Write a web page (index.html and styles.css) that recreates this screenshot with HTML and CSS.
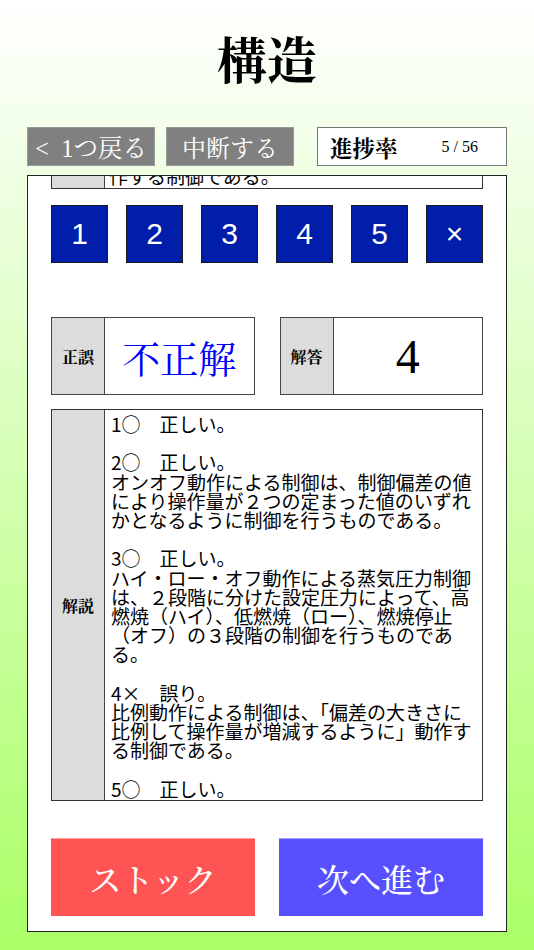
FILE: index.html
```html
<!DOCTYPE html>
<html lang="ja">
<head>
<meta charset="utf-8">
<title>構造</title>
<link rel="stylesheet" href="styles.css">
</head>
<body>
<div class="page">
  <h1 class="title">構造</h1>
  <div class="toolbar">
    <div class="tool-btn back">&lt;&nbsp;&nbsp;1つ戻る</div>
    <div class="tool-btn">中断する</div>
    <div class="progress"><span class="progress-label">進捗率</span><span class="progress-count">5 / 56</span></div>
  </div>
  <div class="panel">
    <div class="q-tail"><div class="cell-label"></div><div class="q-tail-text">作する制御である。</div></div>
    <div class="choices">
      <div class="choice">1</div>
      <div class="choice">2</div>
      <div class="choice">3</div>
      <div class="choice">4</div>
      <div class="choice">5</div>
      <div class="choice">×</div>
    </div>
    <div class="result-row">
      <div class="result-box"><div class="cell-label">正誤</div><div class="result-value verdict">不正解</div></div>
      <div class="result-box"><div class="cell-label">解答</div><div class="result-value answer">4</div></div>
    </div>
    <div class="explain">
      <div class="cell-label">解説</div>
      <div class="explain-text">1○　正しい。<br><br>2○　正しい。<br>オンオフ動作による制御は、制御偏差の値<br>により操作量が２つの定まった値のいずれ<br>かとなるように制御を行うものである。<br><br>3○　正しい。<br>ハイ・ロー・オフ動作による蒸気圧力制御<br>は、２段階に分けた設定圧力によって、高<br>燃焼（ハイ）、低燃焼（ロー）、燃焼停止<br>（オフ）の３段階の制御を行うものであ<br>る。<br><br>4×　誤り。<br>比例動作による制御は、「偏差の大きさに<br>比例して操作量が増減するように」動作す<br>る制御である。<br><br>5○　正しい。</div>
    </div>
    <div class="actions">
      <div class="action stock">ストック</div>
      <div class="action next">次へ進む</div>
    </div>
  </div>
</div>
</body>
</html>
```

FILE: styles.css
```css
html, body {
  margin: 0;
  padding: 0;
}

body {
  width: 534px;
  height: 950px;
  overflow: hidden;
  background: linear-gradient(to bottom, #ffffff 0%, #aaff66 100%);
  font-family: "Noto Sans CJK JP", sans-serif;
  color: #000;
}

.page {
  display: flex;
  flex-direction: column;
  padding-top: 37px;
}

.title {
  margin: 0;
  height: 50px;
  line-height: 50px;
  font-size: 50px;
  font-weight: bold;
  text-align: center;
  font-family: "Liberation Serif", "Noto Serif CJK JP", "Noto Sans CJK JP", serif;
}

.toolbar {
  display: flex;
  margin: 40px 27px 0;
  height: 39px;
}

.tool-btn {
  width: 128px;
  box-sizing: border-box;
  background: #808080;
  border: 1px solid #9a9a9a;
  color: #fff;
  display: flex;
  align-items: center;
  justify-content: center;
  font-size: 24px;
  font-family: "Liberation Serif", "Noto Serif CJK JP", "Noto Sans CJK JP", serif;
  white-space: nowrap;
}

.tool-btn.back {
  font-size: 24.5px;
}

.tool-btn + .tool-btn {
  margin-left: 11px;
}

.progress {
  margin-left: 23px;
  flex: 1;
  box-sizing: border-box;
  background: #fff;
  border: 1px solid #777;
  display: flex;
  align-items: center;
  padding-left: 12px;
}

.progress-label {
  font-size: 22.5px;
  font-weight: bold;
  font-family: "Liberation Serif", "Noto Serif CJK JP", "Noto Sans CJK JP", serif;
}

.progress-count {
  margin-left: auto;
  margin-right: 28px;
  font-size: 16px;
  font-family: "Liberation Serif", serif;
}

.panel {
  margin: 9px 27px 0;
  background: #fff;
  border: 1px solid #222;
  padding: 0 23px 15px;
  display: flex;
  flex-direction: column;
}

.cell-label {
  width: 53px;
  flex: none;
  align-self: stretch;
  box-sizing: border-box;
  background: #dcdcdc;
  border-right: 1px solid #444;
  display: flex;
  align-items: center;
  justify-content: center;
  font-size: 16px;
  font-weight: bold;
  font-family: "Liberation Serif", "Noto Serif CJK JP", "Noto Sans CJK JP", serif;
}

.q-tail {
  height: 13px;
  box-sizing: border-box;
  border: 1px solid #333;
  border-top: none;
  display: flex;
  align-items: flex-end;
  overflow: hidden;
}

.q-tail-text {
  padding: 0 0 3px 4px;
  font-size: 19px;
  line-height: 19.2px;
  white-space: nowrap;
}

.choices {
  display: flex;
  gap: 18px;
  margin-top: 16px;
}

.choice {
  width: 57px;
  height: 58px;
  box-sizing: border-box;
  background: #001eaa;
  border: 1px solid #1a1a1a;
  color: #fff;
  font-size: 30px;
  font-family: "Liberation Sans", sans-serif;
  display: flex;
  align-items: center;
  justify-content: center;
}

.result-row {
  display: grid;
  grid-template-columns: 1fr 1fr;
  gap: 25px;
  margin-top: 54px;
  height: 78px;
}

.result-box {
  display: flex;
  border: 1px solid #444;
}

.result-value {
  flex: 1;
  display: flex;
  align-items: center;
  justify-content: center;
}

.verdict {
  color: #0000ff;
  font-size: 38px;
  font-family: "Liberation Serif", "Noto Serif CJK JP", "Noto Sans CJK JP", serif;
}

.answer {
  font-size: 48px;
  font-family: "Liberation Serif", serif;
}

.explain {
  display: flex;
  margin-top: 14px;
  border: 1px solid #333;
}

.explain-text {
  padding: 4px 6px 2px;
  font-size: 19px;
  line-height: 19.2px;
}

.actions {
  display: grid;
  grid-template-columns: 1fr 1fr;
  gap: 24px;
  margin-top: 37px;
  height: 78px;
}

.action {
  display: flex;
  align-items: center;
  justify-content: center;
  color: #fff;
  font-size: 32px;
  font-weight: 500;
  font-family: "Liberation Serif", "Noto Serif CJK JP", "Noto Sans CJK JP", serif;
}

.stock {
  background: #ff5454;
  border-top: 1px solid #ff9d9d;
}

.next {
  background: #5850ff;
  border-top: 1px solid #a09cff;
}
```
